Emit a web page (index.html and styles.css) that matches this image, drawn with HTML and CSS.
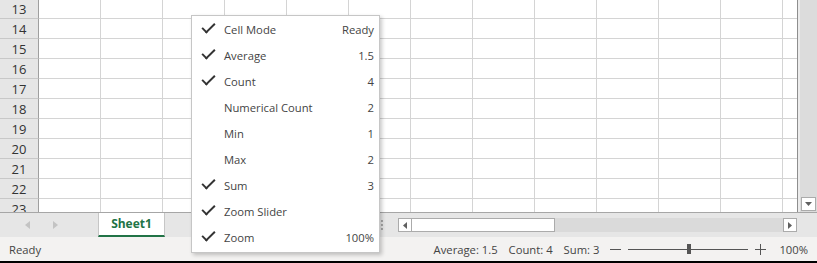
FILE: index.html
```html
<!DOCTYPE html>
<html lang="en">

<head>
    <meta charset="UTF-8">
    <link rel="stylesheet" href="styles.css">
    <title>Status Bar Menu</title>
</head>

<body>
    <div class="app">
        <div class="sheet">
            <div class="grid">
                <div class="rows">
                    <div class="row"><div class="rh">13</div><div class="cells"></div></div>
                    <div class="row"><div class="rh">14</div><div class="cells"></div></div>
                    <div class="row"><div class="rh">15</div><div class="cells"></div></div>
                    <div class="row"><div class="rh">16</div><div class="cells"></div></div>
                    <div class="row"><div class="rh">17</div><div class="cells"></div></div>
                    <div class="row"><div class="rh">18</div><div class="cells"></div></div>
                    <div class="row"><div class="rh">19</div><div class="cells"></div></div>
                    <div class="row"><div class="rh">20</div><div class="cells"></div></div>
                    <div class="row"><div class="rh">21</div><div class="cells"></div></div>
                    <div class="row"><div class="rh">22</div><div class="cells"></div></div>
                    <div class="row"><div class="rh">23</div><div class="cells"></div></div>
                </div>
            </div>
            <div class="vscroll">
                <div class="sbtn">
                    <svg width="7" height="4" viewBox="0 0 7 4"><path d="M0 0H7L3.5 4Z" fill="#606060"/></svg>
                </div>
            </div>
        </div>

        <div class="tabbar">
            <div class="nav">
                <svg width="5" height="8" viewBox="0 0 5 8"><path d="M5 0V8L0 4Z" fill="#c3c3c3"/></svg>
                <svg width="5" height="8" viewBox="0 0 5 8"><path d="M0 0V8L5 4Z" fill="#c3c3c3"/></svg>
            </div>
            <div class="tab">Sheet1</div>
            <div class="tabspace"></div>
            <div class="splitter">
                <span></span><span></span><span></span>
            </div>
            <div class="hscroll">
                <div class="sbtn">
                    <svg width="4" height="7" viewBox="0 0 4 7"><path d="M4 0V7L0 3.5Z" fill="#606060"/></svg>
                </div>
                <div class="thumb"></div>
                <div class="track"></div>
                <div class="sbtn">
                    <svg width="4" height="7" viewBox="0 0 4 7"><path d="M0 0V7L4 3.5Z" fill="#606060"/></svg>
                </div>
            </div>
            <div class="corner"></div>
        </div>

        <div class="status">
            <span class="mode">Ready</span>
            <span class="agg">Average: 1.5</span>
            <span class="agg">Count: 4</span>
            <span class="agg">Sum: 3</span>
            <div class="zoom">
                <span class="minus"></span>
                <div class="slider"><span class="knob"></span></div>
                <span class="plus"></span>
                <span class="pct">100%</span>
            </div>
        </div>

        <ul class="menu">
            <li class="on"><span class="label">Cell Mode</span><span class="value">Ready</span></li>
            <li class="on"><span class="label">Average</span><span class="value">1.5</span></li>
            <li class="on"><span class="label">Count</span><span class="value">4</span></li>
            <li><span class="label">Numerical Count</span><span class="value">2</span></li>
            <li><span class="label">Min</span><span class="value">1</span></li>
            <li><span class="label">Max</span><span class="value">2</span></li>
            <li class="on"><span class="label">Sum</span><span class="value">3</span></li>
            <li class="on"><span class="label">Zoom Slider</span><span class="value"></span></li>
            <li class="on"><span class="label">Zoom</span><span class="value">100%</span></li>
        </ul>
    </div>
</body>

</html>
```

FILE: styles.css
```css
body {
    margin: 0;
    font-family: 'Segoe UI', 'Open Sans', sans-serif;
    color: #444;
    overflow: hidden;
}

.app {
    position: relative;
    width: 817px;
    height: 263px;
    display: flex;
    flex-direction: column;
    border-bottom: 2px solid #000;
    box-sizing: border-box;
}

/* sheet grid */

.sheet {
    display: flex;
    height: 213px;
    border-bottom: 1px solid #a6a6a6;
    box-sizing: border-box;
}

.grid {
    flex: 1;
    overflow: hidden;
    background: #fff;
}

.rows {
    margin-top: -1px;
}

.row {
    display: flex;
    height: 20px;
}

.rh {
    width: 39px;
    box-sizing: border-box;
    background: #e6e6e6;
    border-right: 1px solid #9f9f9f;
    border-bottom: 1px solid #c8c8c8;
    text-align: center;
    font-size: 13px;
    line-height: 20px;
    color: #333;
}

.cells {
    flex: 1;
    border-bottom: 1px solid #d4d4d4;
    background: linear-gradient(to right, transparent 61px, #d4d4d4 61px) 0 0 / 62px 100%;
}

.vscroll {
    width: 20px;
    box-sizing: border-box;
    border-left: 1px solid #8e8e8e;
    background: #dcdcdc;
    box-shadow: inset 2px 0 #ececec;
    padding: 0 1px 1px 3px;
    display: flex;
    flex-direction: column;
    justify-content: flex-end;
}

.sbtn {
    width: 15px;
    height: 14px;
    box-sizing: border-box;
    background: #fff;
    border: 1px solid #ababab;
    display: flex;
    align-items: center;
    justify-content: center;
}

/* sheet tabs + horizontal scroll */

.tabbar {
    display: flex;
    height: 24px;
    background: #e6e6e6;
}

.nav {
    width: 98px;
    display: flex;
    align-items: center;
    gap: 23px;
    padding-left: 25px;
    box-sizing: border-box;
}

.tab {
    width: 67px;
    box-sizing: border-box;
    background: #fff;
    border-left: 1px solid #c6c6c6;
    border-right: 1px solid #c6c6c6;
    border-bottom: 2px solid #217346;
    color: #217346;
    font-weight: bold;
    font-size: 12px;
    text-align: center;
    line-height: 22px;
}

.tabspace {
    width: 215px;
}

.splitter {
    width: 18px;
    display: flex;
    flex-direction: column;
    align-items: center;
    justify-content: center;
    gap: 2px;
    padding-right: 14px;
    box-sizing: border-box;
}

.splitter span {
    width: 2px;
    height: 2px;
    background: #a8a8a8;
}

.hscroll {
    width: 399px;
    display: flex;
    align-items: center;
}

.hscroll .sbtn {
    width: 14px;
    height: 14px;
}

.thumb {
    width: 143px;
    height: 14px;
    box-sizing: border-box;
    background: #fff;
    border: 1px solid #ababab;
    border-left: none;
}

.track {
    flex: 1;
    height: 14px;
    background: #dadada;
}

.corner {
    flex: 1;
}

/* status bar */

.status {
    flex: 1;
    display: flex;
    align-items: center;
    background: #f3f2f1;
    font-size: 11.25px;
    color: #444;
    padding: 0 9px;
}

.mode {
    margin-right: auto;
}

.agg {
    margin-right: 11px;
}

.zoom {
    display: flex;
    align-items: center;
}

.minus {
    width: 11px;
    height: 1px;
    background: #555;
}

.slider {
    position: relative;
    width: 120px;
    height: 1px;
    margin: 0 7px;
    background: #555;
}

.knob {
    position: absolute;
    left: 59px;
    top: -5px;
    width: 4px;
    height: 10px;
    background: #555;
}

.plus {
    position: relative;
    width: 11px;
    height: 11px;
}

.plus::before,
.plus::after {
    content: '';
    position: absolute;
    background: #555;
}

.plus::before {
    left: 0;
    top: 5px;
    width: 11px;
    height: 1px;
}

.plus::after {
    left: 5px;
    top: 0;
    width: 1px;
    height: 11px;
}

.pct {
    margin-left: 13px;
}

/* context menu */

.menu {
    position: absolute;
    left: 191px;
    top: 15px;
    width: 189px;
    margin: 0;
    padding: 0 0 2px;
    list-style: none;
    background: #fff;
    border: 1px solid #c6c6c6;
    box-shadow: 2px 2px 4px rgba(0, 0, 0, 0.22);
    box-sizing: border-box;
    font-size: 11.25px;
    color: #444;
}

.menu li {
    display: flex;
    align-items: center;
    height: 26px;
    padding: 0 5px 0 32px;
    position: relative;
}

.menu li.on::before {
    content: '';
    position: absolute;
    left: 10px;
    top: 7px;
    width: 11px;
    height: 5px;
    border-left: 2px solid #333;
    border-bottom: 2px solid #333;
    transform: rotate(-45deg);
}

.label {
    flex: 1;
}
```
